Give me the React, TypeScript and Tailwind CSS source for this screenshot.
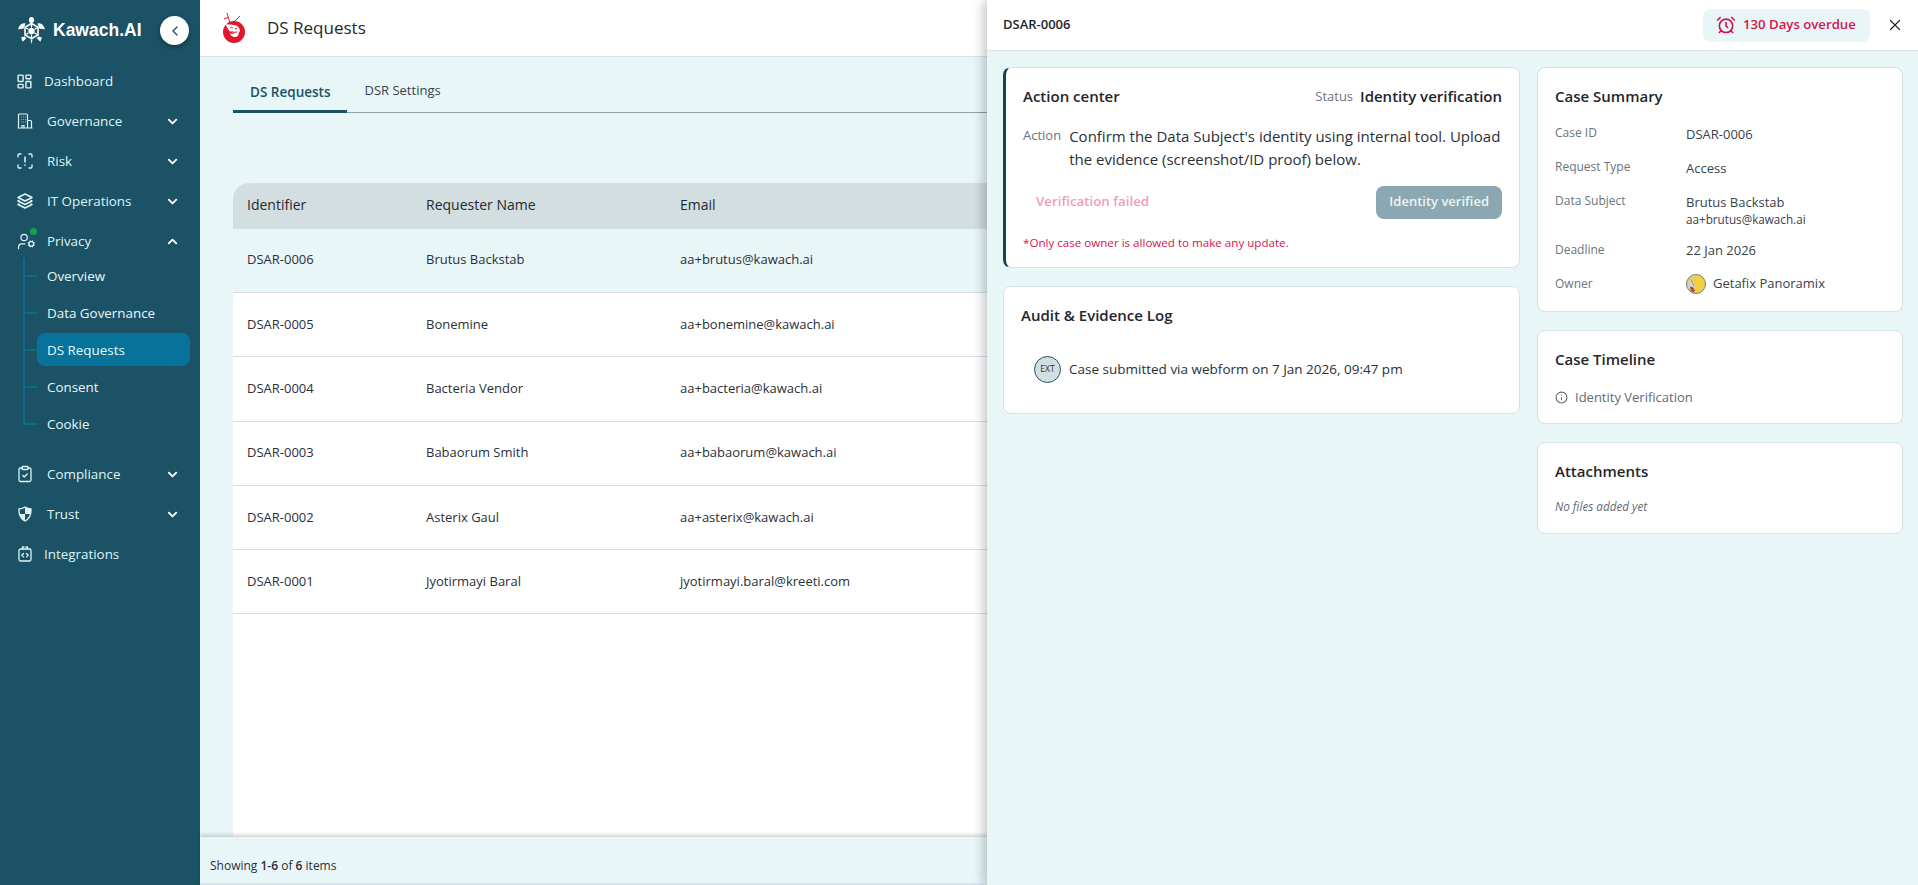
import { AlarmClock, ChevronDown, ChevronLeft, ChevronUp, ClipboardCheck, Info, LayoutDashboard, UserCog, X } from "lucide-react";
import type { ReactNode } from "react";

const rows = [
  { id: "DSAR-0006", name: "Brutus Backstab", email: "aa+brutus@kawach.ai" },
  { id: "DSAR-0005", name: "Bonemine", email: "aa+bonemine@kawach.ai" },
  { id: "DSAR-0004", name: "Bacteria Vendor", email: "aa+bacteria@kawach.ai" },
  { id: "DSAR-0003", name: "Babaorum Smith", email: "aa+babaorum@kawach.ai" },
  { id: "DSAR-0002", name: "Asterix Gaul", email: "aa+asterix@kawach.ai" },
  { id: "DSAR-0001", name: "Jyotirmayi Baral", email: "jyotirmayi.baral@kreeti.com" },
];

const subItems = ["Overview", "Data Governance", "DS Requests", "Consent", "Cookie"];

const TurtleLogo = () => (
  <svg width="27" height="28" viewBox="0 0 27 28" fill="white">
    <ellipse cx="13.5" cy="3" rx="2.6" ry="3" />
    <path d="M13.5 6.5 20 10.2V18l-6.5 3.7L7 18v-7.8z" fill="none" stroke="white" strokeWidth="1.6" />
    <path d="M13.5 10.5 16.6 12.3V16l-3.1 1.8-3.1-1.8v-3.7z" />
    <path d="M13.5 6.5v4M20 10.2l-3.4 2M20 18l-3.4-2M13.5 21.7v-3.9M7 18l3.4-2M7 10.2l3.4 2" stroke="white" strokeWidth="1.2" />
    <path d="M7.5 6.6C4.2 5.6 1.4 7.6 0 12.4c1.800-.7 3.600-.9 5.400-.6l1.300-3z" />
    <path d="M19.500 6.600c3.300-1 6.100 1 7.500 5.800-1.800-.7-3.600-.9-5.400-.6l-1.300-3z" />
    <path d="M6.500 19.500 3 20.500l1.700 4.200 3.600-3.400z" />
    <path d="M20.500 19.500 24 20.500l-1.700 4.200-3.600-3.400z" />
    <path d="M12.500 22.500h2l-1 4.500z" />
  </svg>
);

const BrandMark = () => (
  <svg width="26" height="32" viewBox="0 0 26 32">
    <circle cx="13" cy="20" r="11" fill="#e0182d" />
    <path d="M6 1 9 11M7 5.500l-4 1.500M19 4l-6 6" stroke="#e0182d" strokeWidth="1" fill="none" />
    <path d="M5 12c3 1 5 0 7 1 3 0 5 1 6 3 1.500 1.500 1 4-.5 5 .5 2-1 4-3.500 4-2.500 0-4.500-1.500-5-3.500 2 .5 4 .5 5-.5-3.500-.5-6-2-7-4-.8-1.500-1.800-3-2-5z" fill="white" />
    <path d="M9 16c1-.8 2-.8 3 0M16 16.500l-2 .5M10.500 19.500c2 1 4 1 6 .3M6 27c2 1 3 1.500 5 1.800" stroke="#e0182d" strokeWidth="1" fill="none" />
  </svg>
);

const BuildingIcon = () => (
  <svg width="16" height="16" viewBox="0 0 16 16" fill="none" stroke="currentColor" strokeWidth="1.200">
    <path d="M1.500 15V2a1 1 0 0 1 1-1h7a1 1 0 0 1 1 1v13zM10.500 7.500h3a1 1 0 0 1 1 1V15h-4M.5 15h15M5 15v-2.500h2V15" />
    <path d="M4 4h.6M6 4h.6M8 4h.6M4 6.500h.6M6 6.500h.6M8 6.500h.6M4 9h.6M6 9h.6M8 9h.6" strokeWidth="1" />
  </svg>
);

const RiskIcon = () => (
  <svg width="16" height="16" viewBox="0 0 16 16" fill="none" stroke="currentColor" strokeWidth="1.300" strokeLinecap="round">
    <path d="M1 4V2a1 1 0 0 1 1-1h2M12 1h2a1 1 0 0 1 1 1v2M15 12v2a1 1 0 0 1-1 1h-2M4 15H2a1 1 0 0 1-1-1v-2" />
    <path d="M8 4v5M8 12v.2" strokeWidth="1.500" />
  </svg>
);

const LayersIcon = () => (
  <svg width="16" height="16" viewBox="0 0 16 16" fill="none" stroke="currentColor" strokeWidth="1.500" strokeLinejoin="round">
    <path d="M8 1 15 4.500 8 8 1 4.500z" />
    <path d="M2.500 7.300 1 8l7 3.500L15 8l-1.500-.7" />
    <path d="M2.500 10.800 1 11.500 8 15l7-3.500-1.500-.7" />
  </svg>
);

const ShieldIcon = () => (
  <svg width="16" height="16" viewBox="0 0 16 16" fill="none" stroke="currentColor" strokeWidth="1.300">
    <path d="M8 1c2 1.200 4 1.800 6 2 .3 5.500-1.600 9.700-6 12C3.600 12.700 1.700 8.500 2 3c2-.2 4-.8 6-2z" />
    <path d="M8 1c2 1.200 4 1.800 6 2 .1 1.800 0 3.500-.4 5H8zM8 8v7C5 13.400 3.200 11 2.400 8z" fill="currentColor" stroke="none" />
  </svg>
);

const PluginIcon = () => (
  <svg width="16" height="16" viewBox="0 0 16 16" fill="none" stroke="currentColor" strokeWidth="1.300" strokeLinecap="round" strokeLinejoin="round">
    <rect x="2" y="3" width="12" height="12" rx="1.500" />
    <path d="M5.500 3V1h1.500M10.500 3V1H9M6.500 7.500 4.800 9.200l1.700 1.700M9.500 7.500l1.700 1.700-1.700 1.700" />
  </svg>
);

const OwnerAvatar = () => (
  <svg width="20" height="20" viewBox="0 0 20 20">
    <circle cx="10" cy="10" r="9.500" fill="#f2cf3e" stroke="#6b7f7a" />
    <path d="M1.500 10c1-4 3-6 5-6 1 3 3 6 2 14-3 1-7-3-7-8z" fill="#d9d2c4" />
    <path d="M4 13c2-1 4 0 5 4l-2 1.500C5 18 4 15.500 4 13z" fill="#a4534a" />
    <path d="M5 5l3 7" stroke="#8a8478" strokeWidth=".8" />
  </svg>
);

const NavItem = ({ icon, label, chevron }: { icon: ReactNode; label: string; chevron?: "up" | "down" }) => (
  <div className="h-10 flex items-center pl-[17px] pr-[20px] text-[#dff5f8]">
    <span className={chevron ? "w-[30px]" : "w-[27px]"}>{icon}</span>
    <span className="flex-1 text-[13.400px]">{label}</span>
    {chevron === "down" && <ChevronDown size={15} strokeWidth={3} className="text-white" />}
    {chevron === "up" && <ChevronUp size={15} strokeWidth={3} className="text-white" />}
  </div>
);

const Sidebar = () => (
  <aside className="w-[200px] shrink-0 bg-[#1b5266] flex flex-col">
    <div className="h-[61px] pl-[18px] pr-[11px] flex items-center">
      <TurtleLogo />
      <span className="ml-[8px] font-['Liberation_Sans',sans-serif] font-bold text-[17.500px] text-white">Kawach.AI</span>
      <button type="button" className="ml-auto w-[29px] h-[29px] rounded-full bg-white flex items-center justify-center shadow-[0_2px_5px_rgba(0,0,0,0.35)]">
        <ChevronLeft size={16} className="text-[#1b5266]" />
      </button>
    </div>

    <NavItem icon={<LayoutDashboard size={17} className="-ml-px" />} label="Dashboard" />
    <NavItem icon={<BuildingIcon />} label="Governance" chevron="down" />
    <NavItem icon={<RiskIcon />} label="Risk" chevron="down" />
    <NavItem icon={<LayersIcon />} label="IT Operations" chevron="down" />
    <div className="relative">
      <NavItem icon={<UserCog size={19} strokeWidth={1.500} />} label="Privacy" chevron="up" />
      <span className="absolute left-[30px] top-[7px] w-[7px] h-[7px] rounded-full bg-[#16a34a]" />
    </div>

    <div className="pl-[23px] pr-[10px] -mt-[3px] mb-[12.500px]">
      {subItems.map((item, i) => (
        <div key={item} className="h-[36.800px] flex items-center">
          <div className="w-[14px] self-stretch flex flex-col">
            <div className="flex-1 border-l-2 border-b-2 border-[#0d6b8a]" />
            <div className={i === subItems.length - 1 ? "flex-1" : "flex-1 border-l-2 border-[#0d6b8a]"} />
          </div>
          <div className={item === "DS Requests" ? "flex-1 h-[33px] pl-[10px] flex items-center rounded-lg bg-[#07739a] text-[13.400px] text-[#e8f8fb]" : "flex-1 h-[33px] pl-[10px] flex items-center text-[13.400px] text-[#e8f8fb]"}>
            {item}
          </div>
        </div>
      ))}
    </div>

    <NavItem icon={<ClipboardCheck size={18} strokeWidth={1.700} className="-ml-px" />} label="Compliance" chevron="down" />
    <NavItem icon={<ShieldIcon />} label="Trust" chevron="down" />
    <NavItem icon={<PluginIcon />} label="Integrations" />
  </aside>
);

const RequestsTable = () => (
  <div className="flex-1 ml-[33px] mt-[70px] flex flex-col bg-white rounded-t-2xl overflow-hidden">
    <div className="h-[46px] shrink-0 pb-[4px] grid grid-cols-[179px_254px_1fr] items-center bg-[#d3dee1] text-[14px] font-medium text-[#23292f]">
      <span className="pl-[14px]">Identifier</span>
      <span className="pl-[14px]">Requester Name</span>
      <span className="pl-[14px]">Email</span>
    </div>
    {rows.map((row, i) => (
      <div key={row.id} className={i === 0 ? "h-[64.200px] shrink-0 pb-px grid grid-cols-[179px_254px_1fr] items-center border-b border-[#d8dee1] bg-[#e8f6f8] text-[13px] text-[#2b3038]" : "h-[64.200px] shrink-0 grid grid-cols-[179px_254px_1fr] items-center border-b border-[#d8dee1] text-[13px] text-[#2b3038]"}>
        <span className="pl-[14px]">{row.id}</span>
        <span className="pl-[14px]">{row.name}</span>
        <span className="pl-[14px]">{row.email}</span>
      </div>
    ))}
  </div>
);

const Card = ({ title, className, children }: { title: string; className?: string; children: ReactNode }) => (
  <section className={`bg-white border border-[#d5e2e6] rounded-lg ${className ?? ""}`}>
    <h3 className="text-[15px] font-semibold leading-[20px] text-[#1f262c]">{title}</h3>
    {children}
  </section>
);

const summary = [
  { label: "Case ID", value: "DSAR-0006" },
  { label: "Request Type", value: "Access" },
];

const DetailPanel = () => (
  <div className="absolute top-0 right-0 bottom-0 w-[931px] flex flex-col bg-[#e8f6f8] shadow-[-4px_0_10px_rgba(0,0,0,0.22)]">
    <header className="h-[51px] shrink-0 bg-white border-b border-[#d9e4e8] pl-[16px] pr-[14px] flex items-center">
      <span className="text-[13px] font-semibold text-[#1f262c]">DSAR-0006</span>
      <div className="ml-auto h-[33px] w-[167px] rounded-lg bg-[#e8f6f8] flex items-center pl-[13px] gap-[7px] text-[#d6134f]">
        <AlarmClock size={20} />
        <span className="text-[13.200px] font-semibold">130 Days overdue</span>
      </div>
      <X size={18} strokeWidth={1.600} className="ml-[16px] text-[#1f262c]" />
    </header>

    <div className="flex gap-[17px] pl-[16px] pr-[15px] pt-[16px] items-start">
      <div className="w-[517px] flex flex-col gap-[18px]">
        <section className="h-[201px] bg-white border border-[#d5e2e6] border-l-[3px] border-l-[#0f4757] rounded-lg pl-[17px] pr-[17px] pt-[17px]">
          <div className="flex items-center justify-between">
            <h3 className="text-[15px] font-semibold leading-[20px] text-[#1f262c]">Action center</h3>
            <div className="flex items-center gap-[7px]">
              <span className="text-[13px] text-[#6b757c]">Status</span>
              <span className="text-[15px] font-semibold text-[#1f262c]">Identity verification</span>
            </div>
          </div>
          <div className="mt-[17px] flex gap-[8px]">
            <span className="text-[13px] leading-[20px] text-[#6b757c]">Action</span>
            <p className="text-[15px] leading-[23px] text-[#2b3038]">
              Confirm the Data Subject's identity using internal tool. Upload the evidence (screenshot/ID proof) below.
            </p>
          </div>
          <div className="mt-[15px] flex items-center justify-between">
            <span className="pl-[13px] text-[13.300px] font-semibold text-[#f09cb8]">Verification failed</span>
            <button type="button" className="h-[33px] px-[13px] rounded-lg bg-[#8ba7b2] text-[13px] font-semibold text-[#eef4f6]">
              Identity verified
            </button>
          </div>
          <p className="mt-[15px] text-[11.600px] text-[#d6134f]">*Only case owner is allowed to make any update.</p>
        </section>

        <Card title="Audit & Evidence Log" className="h-[128px] pl-[17px] pt-[18px]">
          <div className="mt-[31px] ml-[13px] flex items-center gap-[8px]">
            <span className="w-[27px] h-[27px] rounded-full bg-[#d3dee1] border border-[#1b5266] flex items-center justify-center text-[8.500px] text-[#2b3038]">EXT</span>
            <span className="text-[13.500px] text-[#2b3038]">Case submitted via webform on 7 Jan 2026, 09:47 pm</span>
          </div>
        </Card>
      </div>

      <div className="w-[366px] flex flex-col gap-[18px]">
        <Card title="Case Summary" className="h-[245px] px-[17px] pt-[18px]">
          <div className="mt-[18px] grid grid-cols-[131px_1fr] items-start gap-y-[14px] text-[13px] text-[#3a4249]">
            {summary.map((s) => (
              <div key={s.label} className="contents">
                <span className="text-[12px] leading-[18px] text-[#6b757c]">{s.label}</span>
                <span className="leading-[19px] pt-px">{s.value}</span>
              </div>
            ))}
            <span className="text-[12px] leading-[18px] text-[#6b757c]">Data Subject</span>
            <div className="pt-px">
              <div className="leading-[19px]">Brutus Backstab</div>
              <div className="text-[11.700px] leading-[15px]">aa+brutus@kawach.ai</div>
            </div>
            <span className="text-[12px] leading-[18px] text-[#6b757c]">Deadline</span>
            <span className="leading-[19px]">22 Jan 2026</span>
            <span className="text-[12px] leading-[20px] text-[#6b757c]">Owner</span>
            <div className="flex items-center gap-[7px]">
              <OwnerAvatar />
              <span>Getafix Panoramix</span>
            </div>
          </div>
        </Card>

        <Card title="Case Timeline" className="h-[94px] px-[17px] pt-[18px]">
          <div className="mt-[19px] flex items-center gap-[7px] text-[13px] text-[#5f6b73]">
            <Info size={13} />
            <span>Identity Verification</span>
          </div>
        </Card>

        <Card title="Attachments" className="h-[92px] px-[17px] pt-[18px]">
          <p className="mt-[17px] text-[11.700px] italic text-[#5f6b73]">No files added yet</p>
        </Card>
      </div>
    </div>
  </div>
);

export default function App() {
  return (
    <div className="relative w-[1918px] h-[885px] overflow-hidden flex bg-[#e8f6f8] font-['Open_Sans',sans-serif]">
      <Sidebar />

      <main className="flex-1 flex flex-col min-w-0">
        <header className="h-[57px] shrink-0 bg-white border-b border-[#d9e4e8] pl-[21px] flex items-center gap-[20px]">
          <BrandMark />
          <h1 className="text-[17px] font-medium text-[#23292f]">DS Requests</h1>
        </header>

        <div className="ml-[33px] h-[56px] shrink-0 flex items-end border-b border-[#8fa3ab]">
          <div className="h-[37px] pt-[6px] px-[17px] border-b-[3px] border-[#1b5266] -mb-px text-[13.500px] font-semibold text-[#1b5266]">DS Requests</div>
          <div className="h-[37px] pt-[6px] px-[17px] text-[13px] text-[#3a4249]">DSR Settings</div>
        </div>

        <RequestsTable />

        <footer className="h-[48px] shrink-0 pt-[11px] flex items-center pl-[10px] border-b-2 border-[#d5e3f3] shadow-[0_-2px_4px_rgba(0,0,0,0.18)] text-[12px] text-[#2b3038]">
          <span>
            Showing <b className="font-semibold">1-6</b> of <b className="font-semibold">6</b> items
          </span>
        </footer>
      </main>

      <DetailPanel />
    </div>
  );
}
